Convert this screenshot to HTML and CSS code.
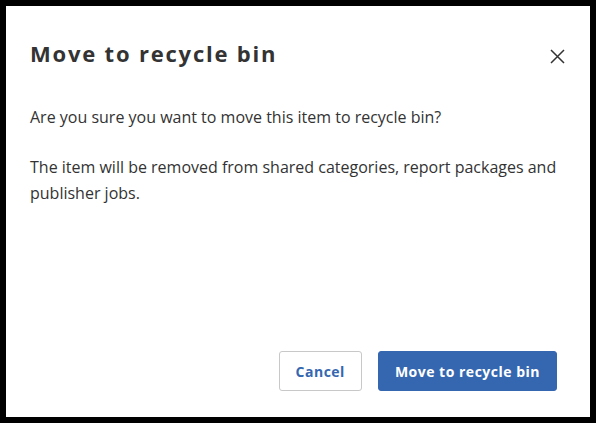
FILE: index.html
```html
<!DOCTYPE html>
<html lang="en">
<head>
<meta charset="utf-8">
<title>Move to recycle bin</title>
<link rel="stylesheet" href="styles.css">
</head>
<body>
<div class="dialog" role="dialog" aria-labelledby="dlg-title">
  <div class="dialog-header">
    <h1 id="dlg-title" class="dialog-title">Move to recycle bin</h1>
    <button class="close-btn" aria-label="Close">
      <svg width="15" height="15" viewBox="0 0 15 15" aria-hidden="true">
        <path d="M1 1 L14 14 M14 1 L1 14" stroke="#333" stroke-width="1.5" fill="none"/>
      </svg>
    </button>
  </div>
  <div class="dialog-body">
    <p>Are you sure you want to move this item to recycle bin?</p>
    <p>The item will be removed from shared categories, report packages and publisher jobs.</p>
  </div>
  <div class="dialog-footer">
    <button class="btn btn-secondary">Cancel</button>
    <button class="btn btn-primary">Move to recycle bin</button>
  </div>
</div>
</body>
</html>
```
FILE: styles.css
```css
html, body {
  margin: 0;
  padding: 0;
  height: 100%;
}
body {
  background: #000;
  font-family: "Open Sans", "Liberation Sans", sans-serif;
  color: #333;
  padding: 6px;
  box-sizing: border-box;
}
.dialog {
  background: #fff;
  height: 100%;
  box-sizing: border-box;
  display: flex;
  flex-direction: column;
  padding: 32px 25px 26px 24px;
}
.dialog-header {
  display: flex;
  align-items: center;
  justify-content: space-between;
  height: 30px;
}
.dialog-title {
  margin: 0;
  font-size: 22px;
  line-height: 30px;
  font-weight: 700;
  color: #333;
  letter-spacing: 1.8px;
}
.close-btn {
  width: 15px;
  height: 15px;
  padding: 0;
  border: 0;
  background: none;
  display: flex;
  align-items: center;
  justify-content: center;
  cursor: pointer;
  margin-top: 6px;
}
.dialog-body {
  margin-top: 36px;
  flex: 1;
}
.dialog-body p {
  margin: 0 0 24px 0;
  font-size: 16px;
  line-height: 26px;
  color: #333;
}
.dialog-footer {
  display: flex;
  justify-content: flex-end;
  gap: 16px;
  padding-right: 8px;
}
.btn {
  height: 40px;
  box-sizing: border-box;
  border-radius: 3px;
  font-family: "Open Sans", "Liberation Sans", sans-serif;
  font-size: 14px;
  font-weight: 700;
  padding: 0 16px;
  cursor: pointer;
  letter-spacing: 0.5px;
}
.btn-secondary {
  background: #fff;
  border: 1px solid #c8c8c8;
  color: #3567b0;
}
.btn-primary {
  background: #3567b0;
  border: 1px solid #3567b0;
  color: #fff;
}
```
